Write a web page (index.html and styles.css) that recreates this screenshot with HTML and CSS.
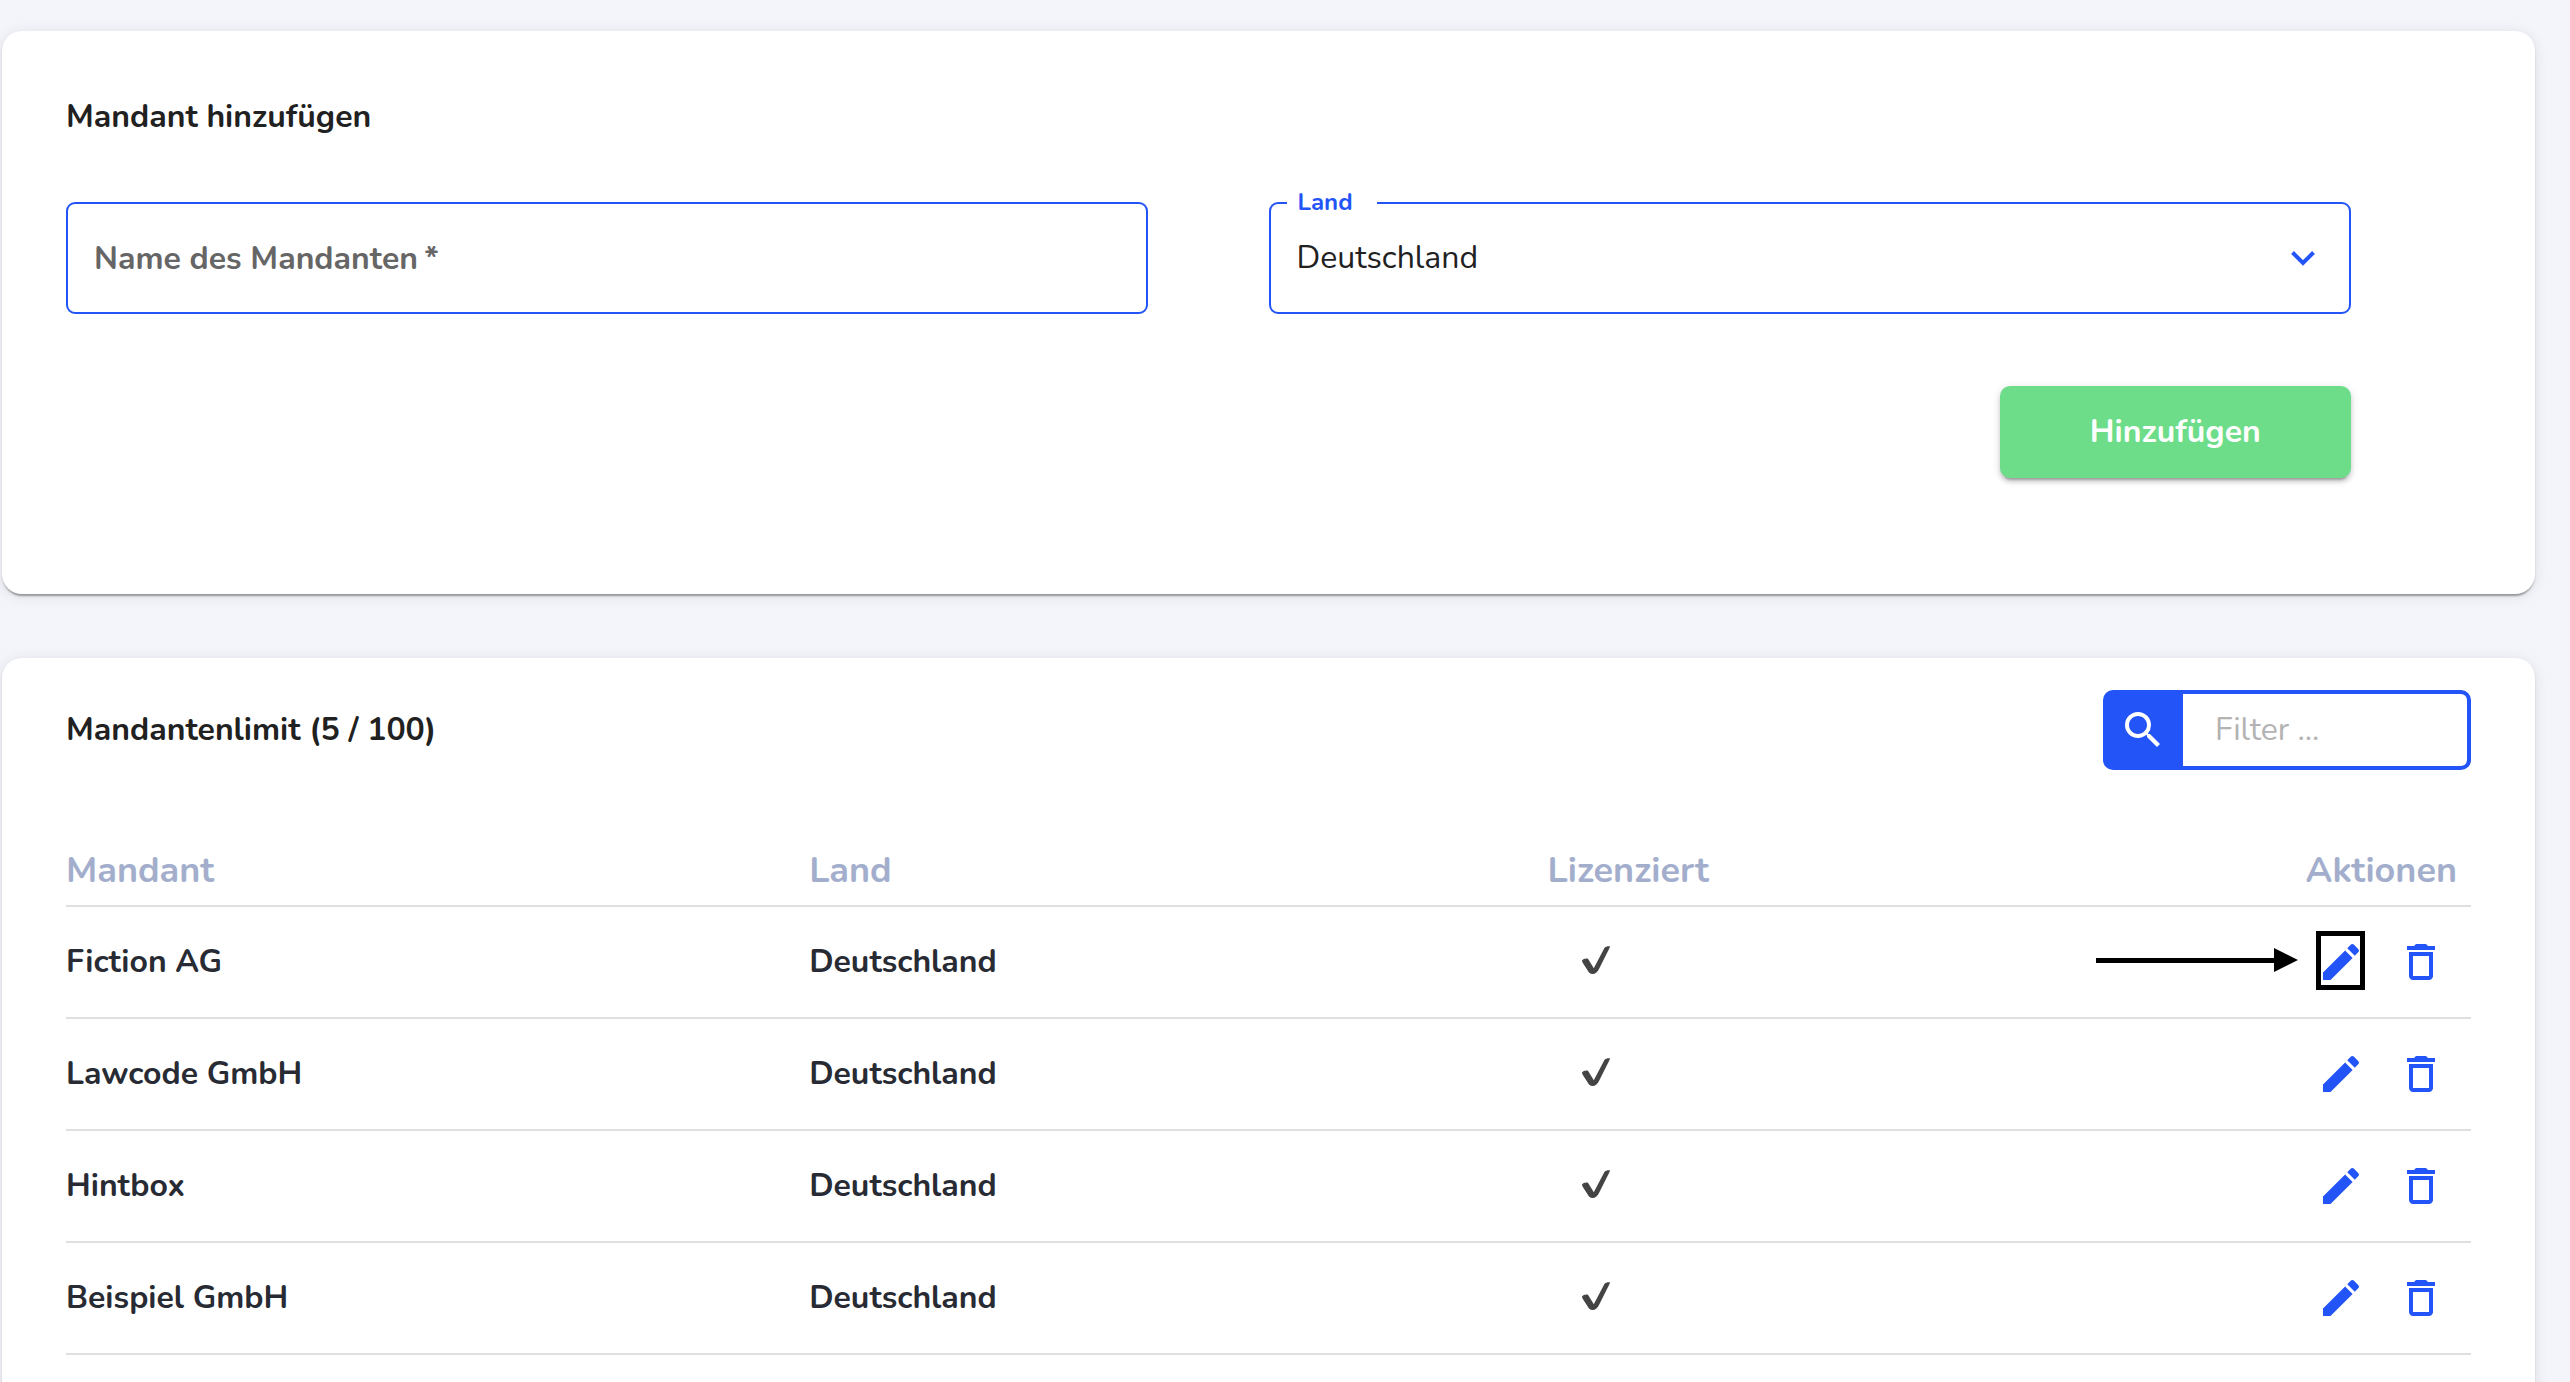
FILE: index.html
```html
<!DOCTYPE html>
<html lang="de">
<head>
<meta charset="utf-8">
<meta name="viewport" content="width=device-width, initial-scale=1">
<title>Mandanten</title>
<link rel="stylesheet" href="styles.css">
</head>
<body>
<svg class="sprite" aria-hidden="true">
  <symbol id="icon-edit" viewBox="0 0 24 24"><path d="M3 17.25V21h3.75L17.81 9.94l-3.75-3.75L3 17.25zM20.71 7.04a1 1 0 0 0 0-1.41l-2.34-2.34a1 1 0 0 0-1.41 0l-1.83 1.83 3.75 3.75 1.83-1.83z"/></symbol>
  <symbol id="icon-delete" viewBox="0 0 24 24"><path d="M6 19c0 1.100.9 2 2 2h8c1.100 0 2-.9 2-2V7H6v12zM8 9h8v10H8V9zm7.500-5l-1-1h-5l-1 1H5v2h14V4z"/></symbol>
  <symbol id="icon-check" viewBox="0 0 28 28"><path d="M0 14.500C1 12.800 4.500 12 6 12.800L11.800 22.200L22.400 2C23.400 .2 26 0 28 .2C27.800 2 26.500 4 25.500 6L17.500 22C15.500 26 13.500 28 10.500 28C8 28 7 26.600 6 25L1.500 18C.6 16.600 0 15.500 0 14.500z"/></symbol>
</svg>
<main class="page">
  <section class="card">
    <h2 class="title">Mandant hinzufügen</h2>
    <form class="form">
      <div class="field">
        <input class="control" id="name" type="text" placeholder="Name des Mandanten&#8201;*" aria-label="Name des Mandanten" required>
      </div>
      <div class="field">
        <label class="field-label" for="land">Land</label>
        <select class="control" id="land"><option>Deutschland</option></select>
        <svg class="chevron" viewBox="0 0 24 16" aria-hidden="true"><path d="M1.500 2.500L12 13L22.500 2.500"/></svg>
      </div>
      <button class="submit" type="submit">Hinzufügen</button>
    </form>
  </section>

  <section class="card card-list">
    <header class="list-header">
      <h2 class="title">Mandantenlimit (5 / 100)</h2>
      <div class="filter">
        <label class="filter-icon" for="filter" aria-label="Filter"><svg class="icon" viewBox="0 0 24 24" aria-hidden="true"><path d="M15.500 14h-.79l-.28-.27A6.471 6.471 0 0 0 16 9.500 6.500 6.500 0 1 0 9.500 16c1.610 0 3.090-.59 4.230-1.570l.27.28v.79l5 4.990L20.490 19l-4.990-5zm-6 0C7.010 14 5 11.990 5 9.500S7.010 5 9.500 5 14 7.010 14 9.500 11.990 14 9.500 14z"/></svg></label>
        <input class="filter-input" id="filter" type="text" placeholder="Filter ...">
      </div>
    </header>
    <table class="table">
      <colgroup><col class="col-name"><col class="col-land"><col><col></colgroup>
      <thead>
        <tr><th>Mandant</th><th>Land</th><th>Lizenziert</th><th class="head-actions">Aktionen</th></tr>
      </thead>
      <tbody>
        <tr>
          <td>Fiction AG</td><td>Deutschland</td>
          <td><svg class="check" role="img" aria-label="Ja"><use href="#icon-check"/></svg></td>
          <td><div class="actions">
            <div class="callout">
              <button class="icon-button" type="button" aria-label="Bearbeiten"><svg class="icon"><use href="#icon-edit"/></svg></button>
              <span class="callout-frame"></span>
              <svg class="callout-arrow" viewBox="0 0 202 24" aria-hidden="true"><path d="M0 10h178V0l24 12-24 12V15H0z"/></svg>
            </div>
            <button class="icon-button" type="button" aria-label="Löschen"><svg class="icon"><use href="#icon-delete"/></svg></button>
          </div></td>
        </tr>
        <tr>
          <td>Lawcode GmbH</td><td>Deutschland</td>
          <td><svg class="check" role="img" aria-label="Ja"><use href="#icon-check"/></svg></td>
          <td><div class="actions">
            <button class="icon-button" type="button" aria-label="Bearbeiten"><svg class="icon"><use href="#icon-edit"/></svg></button>
            <button class="icon-button" type="button" aria-label="Löschen"><svg class="icon"><use href="#icon-delete"/></svg></button>
          </div></td>
        </tr>
        <tr>
          <td>Hintbox</td><td>Deutschland</td>
          <td><svg class="check" role="img" aria-label="Ja"><use href="#icon-check"/></svg></td>
          <td><div class="actions">
            <button class="icon-button" type="button" aria-label="Bearbeiten"><svg class="icon"><use href="#icon-edit"/></svg></button>
            <button class="icon-button" type="button" aria-label="Löschen"><svg class="icon"><use href="#icon-delete"/></svg></button>
          </div></td>
        </tr>
        <tr>
          <td>Beispiel GmbH</td><td>Deutschland</td>
          <td><svg class="check" role="img" aria-label="Ja"><use href="#icon-check"/></svg></td>
          <td><div class="actions">
            <button class="icon-button" type="button" aria-label="Bearbeiten"><svg class="icon"><use href="#icon-edit"/></svg></button>
            <button class="icon-button" type="button" aria-label="Löschen"><svg class="icon"><use href="#icon-delete"/></svg></button>
          </div></td>
        </tr>
      </tbody>
    </table>
  </section>
</main>
</body>
</html>
```
FILE: styles.css
```css
:root {
  --blue: #2354f8;
  --ink: #212121;
  --font: Nunito, "Open Sans", "Noto Sans", sans-serif;
}

* { box-sizing: border-box; }

body {
  margin: 0;
  background: #f4f5fb;
  color: var(--ink);
  font: 400 32px/44px var(--font);
}

button, input, select { font: inherit; color: inherit; }

.sprite { display: none; }

.page {
  display: flex;
  flex-direction: column;
  gap: 64px;
  padding: 31px 35px 0 2px;
}

.card {
  padding: 64px 64px 116px;
  border-radius: 20px;
  background: #fff;
  box-shadow: 0 4px 2px -2px rgba(0, 0, 0, .24), 0 2px 2px rgba(0, 0, 0, .14), 0 2px 14px rgba(0, 0, 0, .1);
}

.card-list { padding: 32px 64px 96px; }

.title {
  margin: 0;
  font-size: 32px;
  font-weight: 700;
  line-height: 44px;
}

.form {
  display: grid;
  grid-template-columns: 45% 45%;
  column-gap: 5%;
  row-gap: 72px;
  margin-top: 63px;
}

.field { position: relative; }

.control {
  display: block;
  width: 100%;
  height: 112px;
  padding: 0 26px;
  border: 2px solid var(--blue);
  border-radius: 9px;
  background: #fff;
  appearance: none;
  outline: 0;
}

.control::placeholder { color: #666; font-weight: 700; opacity: 1; }

.field-label {
  position: absolute;
  top: -16px;
  left: 18px;
  padding: 0 24px 0 11px;
  background: #fff;
  color: var(--blue);
  font-size: 24px;
  font-weight: 700;
  line-height: 32px;
}

.chevron {
  position: absolute;
  top: 48px;
  right: 36px;
  width: 24px;
  height: 16px;
  fill: none;
  stroke: var(--blue);
  stroke-width: 4;
  pointer-events: none;
}

.submit {
  grid-column: 2;
  justify-self: end;
  height: 92px;
  padding: 0 90px;
  border: 0;
  border-radius: 10px;
  background: #6ddd8a;
  color: #fff;
  font-weight: 700;
  box-shadow: 0 6px 2px -4px rgba(0, 0, 0, .2), 0 4px 4px rgba(0, 0, 0, .14), 0 2px 10px rgba(0, 0, 0, .12);
}

.list-header {
  display: flex;
  align-items: center;
  justify-content: space-between;
}

.filter {
  display: flex;
  width: 368px;
  height: 80px;
  border: 4px solid var(--blue);
  border-radius: 10px;
  background: var(--blue);
}

.filter-icon {
  display: flex;
  flex: none;
  align-items: center;
  justify-content: center;
  width: 76px;
  padding-right: 4px;
  color: #fff;
}

.filter-input {
  flex: 1;
  min-width: 0;
  padding: 0 32px;
  border: 0;
  border-radius: 0 6px 6px 0;
  background: #fff;
  outline: 0;
}

.filter-input::placeholder { color: #b3b3b3; opacity: 1; }

.icon { display: block; width: 48px; height: 48px; fill: currentColor; }

.table {
  width: 100%;
  margin-top: 73px;
  border-collapse: separate;
  border-spacing: 0;
  table-layout: fixed;
}

.col-name { width: 30.9%; }
.col-land { width: 30.7%; }

.table th, .table td {
  padding: 0;
  border-bottom: 2px solid #e0e0e0;
  text-align: left;
}

.table th {
  height: 64px;
  padding-bottom: 6px;
  color: #a3aecc;
  font-size: 36px;
  font-weight: 700;
  line-height: 48px;
}

.table .head-actions { padding-right: 14px; text-align: right; }

.table td {
  height: 112px;
  color: #282b33;
  font-weight: 700;
}

.check { display: block; width: 28px; height: 28px; margin: 0 0 4px 35px; fill: #444; }

.actions {
  display: flex;
  justify-content: flex-end;
  gap: 32px;
  padding-right: 26px;
}

.icon-button {
  display: block;
  padding: 0;
  border: 0;
  background: none;
  color: var(--blue);
}

.callout { position: relative; }

.callout-frame {
  position: absolute;
  inset: -7px 0 -4px -1px;
  border: 5px solid #000;
}

.callout-arrow {
  position: absolute;
  top: 10px;
  right: 67px;
  width: 202px;
  height: 24px;
}
```
